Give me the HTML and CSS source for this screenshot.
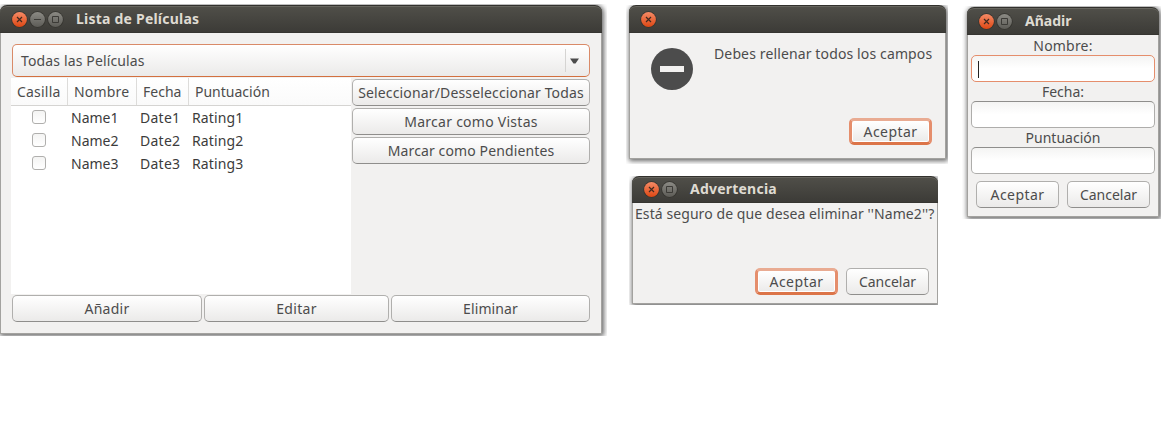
FILE: index.html
```
<!DOCTYPE html>
<html lang="es">
<head>
<meta charset="utf-8">
<title>Lista de Películas</title>
<link rel="stylesheet" href="styles.css">
</head>
<body>
<svg class="defs" width="0" height="0" aria-hidden="true">
  <defs>
    <linearGradient id="orange" x1="0" y1="0" x2="0" y2="1"><stop offset="0" stop-color="#f58a66"/><stop offset="1" stop-color="#dd4814"/></linearGradient>
    <linearGradient id="grey" x1="0" y1="0" x2="0" y2="1"><stop offset="0" stop-color="#8b8a84"/><stop offset="1" stop-color="#5d5c57"/></linearGradient>
    <symbol id="close" viewBox="0 0 17 17"><circle cx="8.5" cy="8.5" r="8.2" fill="#35342f"/><circle cx="8.5" cy="8.5" r="7.4" fill="url(#orange)"/><path d="M6 6l5 5M11 6l-5 5" stroke="#40291f" stroke-width="1.2"/></symbol>
    <symbol id="min" viewBox="0 0 17 17"><circle cx="8.5" cy="8.5" r="8.2" fill="#35342f"/><circle cx="8.5" cy="8.5" r="7.4" fill="url(#grey)"/><path d="M5 8.5h7" stroke="#3c3b37"/></symbol>
    <symbol id="max" viewBox="0 0 17 17"><circle cx="8.5" cy="8.5" r="8.2" fill="#35342f"/><circle cx="8.5" cy="8.5" r="7.4" fill="url(#grey)"/><path d="M5.5 5.5h6v6h-6z" fill="none" stroke="#3c3b37"/></symbol>
  </defs>
</svg>

<div class="frame frame-list">
  <section class="window">
    <header class="titlebar"><svg class="ctl"><use href="#close"/></svg><svg class="ctl"><use href="#min"/></svg><svg class="ctl"><use href="#max"/></svg><h1 class="t-lista">Lista de Películas</h1></header>
    <div class="list-body">
      <div class="combo"><span class="t-todas">Todas las Películas</span><svg class="arrow" viewBox="0 0 9 6"><path d="M0 .5h9L5.5 5.5h-2z" fill="#4c4c4c"/></svg></div>
      <div class="middle">
        <div class="table">
          <div class="row head"><span class="t-casilla">Casilla</span><span class="t-nombre">Nombre</span><span>Fecha</span><span>Puntuación</span></div>
          <div class="row"><span><i class="check"></i></span><span>Name1</span><span class="t-date">Date1</span><span class="t-rating">Rating1</span></div>
          <div class="row"><span><i class="check"></i></span><span>Name2</span><span class="t-date">Date2</span><span class="t-rating">Rating2</span></div>
          <div class="row"><span><i class="check"></i></span><span>Name3</span><span class="t-date">Date3</span><span class="t-rating">Rating3</span></div>
        </div>
        <div class="side">
          <button class="btn"><span class="t-selec">Seleccionar/Desseleccionar Todas</span></button>
          <button class="btn"><span class="t-vistas">Marcar como Vistas</span></button>
          <button class="btn"><span class="t-pend">Marcar como Pendientes</span></button>
        </div>
      </div>
      <div class="bottom">
        <button class="btn"><span class="t-anadir">Añadir</span></button>
        <button class="btn"><span class="t-editar">Editar</span></button>
        <button class="btn"><span class="t-eliminar">Eliminar</span></button>
      </div>
    </div>
  </section>
</div>

<div class="frame frame-error">
  <section class="window">
    <header class="titlebar"><svg class="ctl"><use href="#close"/></svg></header>
    <div class="error-body">
      <div class="message"><svg class="stop" viewBox="0 0 42 42"><circle cx="21" cy="21" r="21" fill="#4c4c4c"/><path d="M9 18h24v6H9z" fill="#f2f1f0"/></svg><p class="t-debes">Debes rellenar todos los campos</p></div>
      <div class="actions"><button class="btn default"><span class="t-aceptar">Aceptar</span></button></div>
    </div>
  </section>
</div>

<div class="frame frame-warn">
  <section class="window">
    <header class="titlebar"><svg class="ctl"><use href="#close"/></svg><svg class="ctl"><use href="#max"/></svg><h1 class="t-adv">Advertencia</h1></header>
    <div class="warn-body">
      <p class="t-esta">Está seguro de que desea eliminar ''Name2''?</p>
      <div class="actions"><button class="btn default"><span class="t-aceptar">Aceptar</span></button><button class="btn"><span>Cancelar</span></button></div>
    </div>
  </section>
</div>

<div class="frame frame-add">
  <section class="window">
    <header class="titlebar"><svg class="ctl"><use href="#close"/></svg><svg class="ctl"><use href="#max"/></svg><h1>Añadir</h1></header>
    <div class="add-body">
      <label class="t-nombre">Nombre:</label><div class="field focus"><i class="caret"></i></div>
      <label>Fecha:</label><div class="field"></div>
      <label>Puntuación</label><div class="field"></div>
      <div class="actions"><button class="btn"><span class="t-aceptar">Aceptar</span></button><button class="btn"><span>Cancelar</span></button></div>
    </div>
  </section>
</div>
</body>
</html>
```
FILE: styles.css
```
* { box-sizing: border-box; }
body { margin: 0; background: #fff; color: #4c4c4c; font: 14px/20px "Noto Sans", sans-serif; }
h1, p { margin: 0; }
span, h1, p, label { white-space: nowrap; }
.defs { position: absolute; }

.frame { position: absolute; overflow: hidden; }
.frame-list { left: 0; top: 4px; width: 607px; height: 332px; padding: 1px 5px 2px 0; }
.frame-error { left: 626px; top: 5px; width: 322px; height: 159px; padding: 0 2px 5px 3px; }
.frame-warn { left: 629px; top: 176px; width: 309px; height: 129px; padding: 0 0 1px 3px; }
.frame-add { left: 962px; top: 6px; width: 199px; height: 213px; padding: 1px 2px 2px 5px; }

.window { display: flex; flex-direction: column; height: 100%; background: #f2f1f0; border: 1px solid #a3a29f; border-top: 0; border-radius: 7px 7px 0 0; box-shadow: 1px 1px 5px 1px rgba(0, 0, 0, .6); }
.titlebar { display: flex; align-items: flex-start; flex: none; height: 28px; margin: 0 -1px; padding: 5px 0 0 11px; background: linear-gradient(#504f49, #3c3b37); border-radius: 7px 7px 0 0; border-top: 1px solid #32312d; box-shadow: inset 0 1px #66655e; border-bottom: 1px solid #363531; }
.ctl { width: 17px; height: 17px; margin-right: 1px; flex: none; }
.titlebar h1 { margin: -2px 0 0 11px; color: #dfdbd2; font-size: 14px; line-height: 20px; font-weight: 700; }
.frame-warn .titlebar { height: 27px; padding-top: 4px; }

.btn { display: flex; align-items: center; justify-content: center; height: 27px; padding: 0; color: #4c4c4c; font: inherit; background: linear-gradient(#fff, #ebeae9); border: 1px solid #b0afad; border-bottom-color: #8f8e8c; border-radius: 5px; }
.btn.default { border: 3px solid #e58e6c; border-top-color: #e9ab92; border-bottom-color: #dc7448; box-shadow: inset 0 0 0 1px #fff; }
.actions { display: flex; justify-content: flex-end; gap: 8px; }
.actions .btn { width: 83px; }

.list-body { padding: 11px 11px 0 10px; }
.combo { display: flex; align-items: center; justify-content: space-between; height: 33px; margin-left: 1px; padding: 0 10px 0 8px; border: 1px solid #d98a68; border-bottom-color: #d3703f; border-radius: 5px; background: linear-gradient(#fff, #ebeae9); }
.arrow { box-sizing: content-box; width: 9px; height: 6px; padding: 9px 0 8px 4px; border-left: 1px solid #d5d4d2; }
.middle { display: flex; gap: 1px; margin-top: 1px; height: 216px; }
.table { width: 340px; background: #fff; color: #3c3c3c; }
.row { display: grid; grid-template-columns: 57px 69px 52px 1fr; height: 23px; align-items: center; }
.row span { padding-left: 3px; }
.row span:first-child { display: grid; place-items: center; padding: 0 2px 0 0; }
.row.head { height: 28px; border-bottom: 1px solid #d5d4d2; color: #4c4c4c; background: linear-gradient(#fff, #fafafa); align-items: stretch; line-height: 27px; }
.row.head span { padding-left: 6px; border-right: 1px solid #dddcda; }
.row.head span:first-child { display: block; }
.row.head span:last-child { border: 0; }
.check { display: block; width: 14px; height: 14px; margin-top: -1px; border: 1px solid #b0afad; border-radius: 3px; background: linear-gradient(#f4f4f3, #fff); }
.side { display: flex; flex-direction: column; gap: 2px; width: 238px; padding-top: 1px; }
.bottom { display: grid; grid-template-columns: 190px 185px 199px; gap: 2px; margin: 1px 0 0 1px; }

.error-body { padding: 11px 13px 0 21px; }
.message { display: flex; gap: 21px; height: 74px; }
.stop { flex: none; width: 42px; height: 42px; margin-top: 4px; }

.warn-body { display: flex; flex-direction: column; flex: 1; padding: 1px 8px 8px 2px; }
.warn-body .actions { margin-top: auto; }

.add-body { display: flex; flex-direction: column; padding: 1px 3px; }
.add-body label { height: 19px; text-align: center; }
.field { height: 27px; border: 1px solid #aeadab; border-top-color: #8f8e8c; border-radius: 5px; background: linear-gradient(#f4f4f3, #fff 50%); }
.field.focus { border-color: #e58e6c; padding: 5px 6px; }
.caret { display: block; width: 1px; height: 17px; background: #222; }
.add-body .actions { margin: 7px 5px 0; justify-content: flex-start; }

/* Tracking per label */
.t-lista { letter-spacing: .22px; }
.t-todas { letter-spacing: .14px; }
.t-casilla { letter-spacing: .2px; }
.t-nombre { letter-spacing: .2px; }
.t-date { letter-spacing: .25px; }
.t-rating { letter-spacing: .12px; }
.t-selec { letter-spacing: .15px; }
.t-vistas { letter-spacing: .26px; }
.t-pend { letter-spacing: .12px; }
.t-anadir { letter-spacing: .25px; }
.t-editar { letter-spacing: .3px; }
.t-eliminar { letter-spacing: .1px; }
.t-debes { letter-spacing: .13px; }
.t-aceptar { letter-spacing: .42px; }
.t-adv { letter-spacing: .22px; }
.t-esta { letter-spacing: .08px; }
```
